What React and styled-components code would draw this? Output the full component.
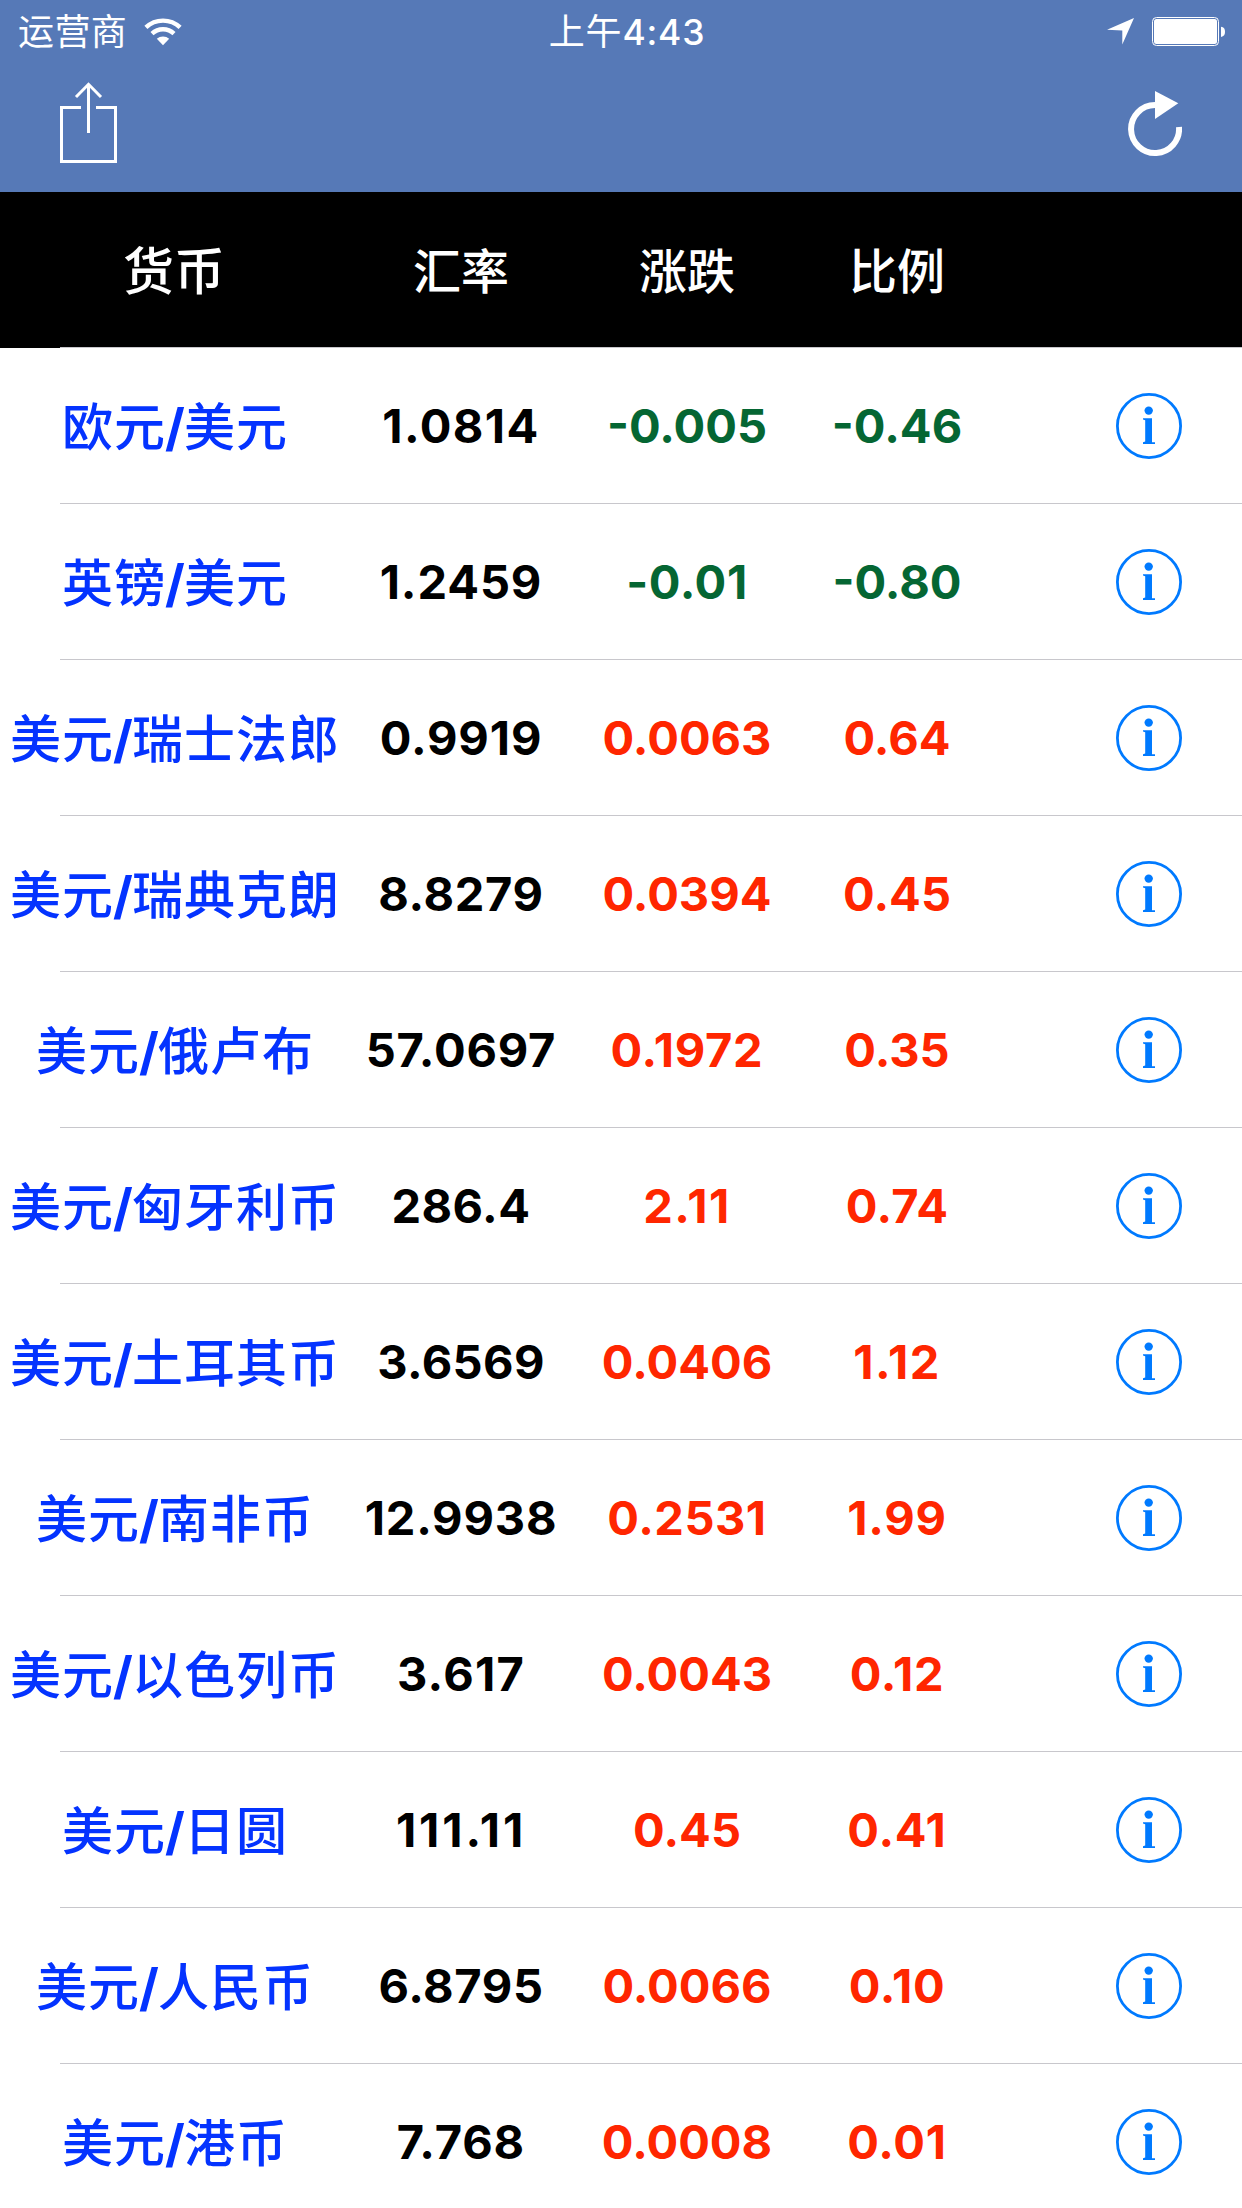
import React from "react";
import styled, { createGlobalStyle } from "styled-components";

const GlobalStyle = createGlobalStyle`
  body {
    margin: 0;
    background: #fff;
    font-family: Inter, "Noto Sans CJK SC", sans-serif;
  }
`;

const Screen = styled.div`
  width: 1242px;
  height: 2208px;
  overflow: hidden;
  background: #fff;
`;

const TopArea = styled.header`
  height: 192px;
  background: #5679b7;
  color: #fff;

  svg {
    display: block;
  }
`;

const StatusBar = styled.div`
  height: 60px;
  display: grid;
  grid-template-columns: 1fr auto 1fr;
  align-items: center;
  padding: 0 17px 0 18px;
  box-sizing: border-box;
  font-size: 36px;
  line-height: 60px;
`;

const Carrier = styled.div`
  display: flex;
  align-items: center;
  gap: 17px;
  letter-spacing: 0.4px;
`;

const Clock = styled.div`
  padding: 2px 0 0 11px;
  font-weight: 500;
  font-size: 35.5px;
  letter-spacing: 0.8px;

  span {
    font-weight: 400;
    font-size: 36px;
  }
`;

const StatusIcons = styled.div`
  display: flex;
  align-items: center;
  justify-content: flex-end;
  gap: 18px;
`;

const NavBar = styled.nav`
  height: 132px;
  display: flex;
  justify-content: space-between;
  align-items: flex-start;
  padding: 22px 60px 0;
  box-sizing: border-box;
`;

const IconButton = styled.button`
  border: 0;
  padding: 0;
  background: none;
  color: inherit;
`;

const RefreshButton = styled(IconButton)`
  margin-top: 9px;
`;

const Row = styled.div`
  height: 156px;
  display: flex;
  flex-direction: column;
  background: ${(props) => (props.$header ? "#000" : "#fff")};
  color: ${(props) => (props.$header ? "#fff" : "#000")};
`;

const Cells = styled.div`
  flex: 1;
  display: grid;
  grid-template-columns: 348px 226px 226px 194px 1fr;
  align-items: center;
`;

const Separator = styled.div`
  height: 1px;
  margin-left: 60px;
  background: #c8c7cc;
`;

const Cell = styled.div`
  text-align: center;
  white-space: nowrap;
  font-size: 48px;
  font-weight: 500;
`;

const HeaderCell = styled(Cell)`
  padding-bottom: 4px;
  font-size: ${(props) => (props.$large ? "51px" : "48px")};
`;

const PairName = styled(Cell)`
  padding: 0 0 3px 2px;
  font-size: 51px;
  letter-spacing: 1px;
  color: #0433ff;

  span {
    margin: 0 -2px 0 -1px;
    font-weight: 700;
  }
`;

const Value = styled(Cell)`
  padding-bottom: 1px;
  font-size: 47px;
  font-weight: 700;
  letter-spacing: ${(props) => props.$tracking}px;
  color: ${(props) => props.$color || "#000"};
`;

const InfoButton = styled(IconButton)`
  justify-self: end;
  margin-right: 60px;
  color: #007aff;

  svg {
    display: block;
  }
`;

const RISE = "#ff2600";
const FALL = "#056633";

const rates = [
  { base: "欧元", quote: "美元", rate: "1.0814", change: "-0.005", ratio: "-0.46" },
  { base: "英镑", quote: "美元", rate: "1.2459", change: "-0.01", ratio: "-0.80" },
  { base: "美元", quote: "瑞士法郎", rate: "0.9919", change: "0.0063", ratio: "0.64" },
  { base: "美元", quote: "瑞典克朗", rate: "8.8279", change: "0.0394", ratio: "0.45" },
  { base: "美元", quote: "俄卢布", rate: "57.0697", change: "0.1972", ratio: "0.35" },
  { base: "美元", quote: "匈牙利币", rate: "286.4", change: "2.11", ratio: "0.74" },
  { base: "美元", quote: "土耳其币", rate: "3.6569", change: "0.0406", ratio: "1.12" },
  { base: "美元", quote: "南非币", rate: "12.9938", change: "0.2531", ratio: "1.99" },
  { base: "美元", quote: "以色列币", rate: "3.617", change: "0.0043", ratio: "0.12" },
  { base: "美元", quote: "日圆", rate: "111.11", change: "0.45", ratio: "0.41" },
  { base: "美元", quote: "人民币", rate: "6.8795", change: "0.0066", ratio: "0.10" },
  { base: "美元", quote: "港币", rate: "7.768", change: "0.0008", ratio: "0.01" },
];

// 1 and 7 set tight, so open up the numbers that contain them
function tracking(text, extra = 0) {
  const ones = text.split("1").length - 1;
  const sevens = text.split("7").length - 1;
  return extra + (ones * 3 + sevens * 1.3) / text.length;
}

function WifiIcon() {
  return (
    <svg width="38" height="28" viewBox="0 0 38 28" fill="none">
      <path d="M1.9 9.4A24.9 24.9 0 0 1 36.1 9.4" stroke="#fff" strokeWidth="4.4" />
      <path d="M8 15.7A16 16 0 0 1 30 15.7" stroke="#fff" strokeWidth="4.4" />
      <path d="M19 27.3L12.8 20.8A9.2 9.2 0 0 1 25.2 20.8Z" fill="#fff" />
    </svg>
  );
}

function LocationIcon() {
  return (
    <svg width="27" height="27" viewBox="0 0 27 27">
      <path d="M27 0L15.3 26.5V12.5L0 11.8Z" fill="#fff" />
    </svg>
  );
}

function BatteryIcon() {
  return (
    <svg width="73" height="29" viewBox="0 0 73 29">
      <rect x="0.5" y="0.5" width="66" height="28" rx="4" fill="none" stroke="#fff" />
      <rect x="2" y="2" width="63" height="25" rx="2.5" fill="#fff" />
      <path d="M69 9.7C72 10 73 12 73 14.8S72 19.6 69 20Z" fill="#fff" />
    </svg>
  );
}

function ShareIcon() {
  return (
    <svg width="57" height="81" viewBox="0 0 57 81" fill="none" stroke="#fff" strokeWidth="3">
      <path d="M21 25.5H1.5V79.5H55.5V25.5H36" />
      <path d="M28.5 51V2" />
      <path d="M16 15L28.5 2.3L41 15" />
    </svg>
  );
}

function RefreshIcon() {
  return (
    <svg width="54" height="66" viewBox="0 0 54 66">
      <path d="M51 36A24 24 0 1 1 27 14" fill="none" stroke="#fff" strokeWidth="6" />
      <path d="M27 0L50.3 12.3L27 28Z" fill="#fff" />
    </svg>
  );
}

function InfoIcon() {
  return (
    <svg width="66" height="66" viewBox="0 0 66 66" fill="currentColor">
      <circle cx="33" cy="33" r="31.6" fill="none" stroke="currentColor" strokeWidth="2.8" />
      <circle cx="32.7" cy="17.6" r="4.2" />
      <path d="M27 25.2H36V49.2H39V51H27V49.2L29.2 48.6V27.2L27 26.6Z" />
    </svg>
  );
}

function RateRow({ item }) {
  const color = item.change.startsWith("-") ? FALL : RISE;

  return (
    <Row>
      <Cells>
        <PairName>
          {item.base}
          <span>/</span>
          {item.quote}
        </PairName>
        <Value $tracking={tracking(item.rate, 0.4)}>{item.rate}</Value>
        <Value $tracking={tracking(item.change)} $color={color}>
          {item.change}
        </Value>
        <Value $tracking={tracking(item.ratio)} $color={color}>
          {item.ratio}
        </Value>
        <InfoButton aria-label="info">
          <InfoIcon />
        </InfoButton>
      </Cells>
      <Separator />
    </Row>
  );
}

export default function App() {
  return (
    <Screen>
      <GlobalStyle />
      <TopArea>
        <StatusBar>
          <Carrier>
            运营商
            <WifiIcon />
          </Carrier>
          <Clock>
            <span>上午</span>4:43
          </Clock>
          <StatusIcons>
            <LocationIcon />
            <BatteryIcon />
          </StatusIcons>
        </StatusBar>
        <NavBar>
          <IconButton aria-label="share">
            <ShareIcon />
          </IconButton>
          <RefreshButton aria-label="refresh">
            <RefreshIcon />
          </RefreshButton>
        </NavBar>
      </TopArea>
      <Row $header>
        <Cells>
          <HeaderCell $large>货币</HeaderCell>
          <HeaderCell>汇率</HeaderCell>
          <HeaderCell>涨跌</HeaderCell>
          <HeaderCell>比例</HeaderCell>
        </Cells>
        <Separator />
      </Row>
      {rates.map((item) => (
        <RateRow key={item.base + item.quote} item={item} />
      ))}
    </Screen>
  );
}
